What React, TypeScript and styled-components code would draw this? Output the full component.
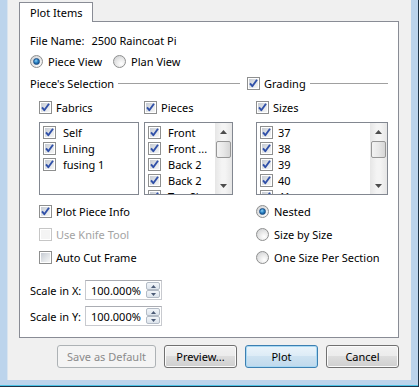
import React from "react";
import styled, { createGlobalStyle, css } from "styled-components";

const GlobalStyle = createGlobalStyle`
    html, body {
        margin: 0;
        padding: 0;
        background: #ffffff;
    }
    body {
        font-family: "Noto Sans", "Open Sans", sans-serif;
        font-size: 11px;
        color: #000000;
    }
`;

const Frame = styled.div`
    width: 419px;
    height: 387px;
    box-sizing: border-box;
    background: #bcd4ec;
    padding: 0 8px 7px 7px;
    box-shadow: inset -1px -1px 0 #1f3347, inset 0 -2px 0 #4cc3e6;
`;

const Body = styled.div`
    height: 380px;
    box-sizing: border-box;
    background: #f0f0f0;
    padding: 2px 12px 0 12px;
    display: flex;
    flex-direction: column;
    box-shadow: inset 1px 0 0 #d9e4ef;
`;

const TabStrip = styled.div`
    display: flex;
    position: relative;
    z-index: 1;
    margin-bottom: -1px;
`;

const Tab = styled.div`
    width: 74px;
    height: 20px;
    box-sizing: border-box;
    border: 1px solid #898c95;
    border-bottom: none;
    background: #ffffff;
    padding-left: 10px;
    display: flex;
    align-items: center;
`;

const Panel = styled.div`
    width: 380px;
    height: 317px;
    box-sizing: border-box;
    border: 1px solid #898c95;
    background: #ffffff;
    padding: 8px 10px 0 10px;
    display: flex;
    flex-direction: column;
`;

const Line = styled.div<{ $top?: number; $h?: number }>`
    height: ${(p) => p.$h ?? 20}px;
    margin-top: ${(p) => p.$top ?? 0}px;
    display: flex;
    align-items: center;
    white-space: nowrap;
`;

const FileLabel = styled.span`
    margin-right: 7px;
`;

const Option = styled.label<{ $gap?: number; $after?: number; $disabled?: boolean }>`
    display: flex;
    align-items: center;
    gap: ${(p) => p.$gap ?? 4}px;
    margin-right: ${(p) => p.$after ?? 0}px;
    color: ${(p) => (p.$disabled ? "#a3a3a3" : "inherit")};
    white-space: nowrap;
`;

const BoxShell = styled.span<{ $disabled?: boolean }>`
    width: 13px;
    height: 13px;
    flex: none;
    box-sizing: border-box;
    border: 1px solid ${(p) => (p.$disabled ? "#c6c6c6" : "#8e8f8f")};
    background: #ffffff;
    padding: 1px;
    display: flex;
`;

const BoxFill = styled.span<{ $disabled?: boolean }>`
    flex: 1;
    position: relative;
    ${(p) =>
        p.$disabled
            ? css`
                  background: #f4f4f4;
              `
            : css`
                  background: linear-gradient(135deg, #c6cbd3 0%, #e4e7ea 60%, #f6f6f6 100%);
              `}
    svg {
        position: absolute;
        left: -1px;
        top: -1px;
    }
`;

const CheckBox = ({ checked, disabled }: { checked?: boolean; disabled?: boolean }) => (
    <BoxShell $disabled={disabled}>
        <BoxFill $disabled={disabled}>
            {checked && (
                <svg width="11" height="11" viewBox="0 0 11 11">
                    <path
                        d="M2 5.3 L4.3 8.2 L9 1.8"
                        fill="none"
                        stroke="#3050a8"
                        strokeWidth="1.9"
                        strokeLinejoin="round"
                    />
                </svg>
            )}
        </BoxFill>
    </BoxShell>
);

const RadioDot = styled.span<{ $on?: boolean }>`
    width: 13px;
    height: 13px;
    flex: none;
    box-sizing: border-box;
    border-radius: 50%;
    border: 1px solid #8e8f8f;
    background: radial-gradient(circle at 65% 70%, #ffffff 0%, #e9e9e9 45%, #c9cbce 100%);
    display: flex;
    align-items: center;
    justify-content: center;
    &::after {
        content: "";
        display: ${(p) => (p.$on ? "block" : "none")};
        width: 5px;
        height: 5px;
        border-radius: 50%;
        background: radial-gradient(circle at 40% 35%, #8fd3f7 0%, #2a82c4 45%, #0c3f74 100%);
        border: 1px solid #1d4f86;
    }
`;

const SelectionRow = styled.div`
    display: flex;
    gap: 7px;
`;

const Group = styled.div<{ $w: number }>`
    width: ${(p) => p.$w}px;
    display: flex;
    flex-direction: column;
`;

const GroupHeader = styled.div`
    height: 20px;
    margin-top: 2px;
    display: flex;
    align-items: center;
    white-space: nowrap;
`;

const Rule = styled.span`
    flex: 1;
    height: 1px;
    margin-left: 4px;
    background: #a0a0a0;
`;

const Indent = styled.div`
    padding-left: 9px;
    display: flex;
    flex-direction: column;
`;

const Columns = styled.div`
    display: flex;
    gap: 5px;
`;

const Column = styled.div<{ $w: number }>`
    width: ${(p) => p.$w}px;
    display: flex;
    flex-direction: column;
`;

const ListBox = styled.div`
    height: 73px;
    margin-top: 5px;
    box-sizing: border-box;
    border: 1px solid #828790;
    background: #ffffff;
    display: flex;
    overflow: hidden;
`;

const Items = styled.div`
    flex: 1;
    padding: 1px 0 0 3px;
    overflow: hidden;
`;

const Item = styled.div<{ $gap: number }>`
    height: 16px;
    display: flex;
    align-items: center;
    gap: ${(p) => p.$gap}px;
    white-space: nowrap;
`;

const ScrollBar = styled.div`
    width: 17px;
    flex: none;
    background: linear-gradient(90deg, #e6e6e6, #f4f4f4 40%, #f4f4f4 60%, #e6e6e6);
    display: flex;
    flex-direction: column;
    align-items: center;
`;

const Arrow = styled.div`
    height: 17px;
    width: 17px;
    display: flex;
    align-items: center;
    justify-content: center;
`;

const Thumb = styled.div`
    margin-top: 1px;
    width: 15px;
    height: 17px;
    box-sizing: border-box;
    border: 1px solid #979797;
    border-radius: 2px;
    background: linear-gradient(90deg, #f3f3f3, #e8e8e8 50%, #d6d6d6);
`;

const Spacer = styled.div`
    flex: 1;
`;

const ScrollArrows = () => (
    <ScrollBar>
        <Arrow>
            <svg width="7" height="4" viewBox="0 0 7 4">
                <path d="M0 4 L3.5 0 L7 4 Z" fill="#4d4d4d" />
            </svg>
        </Arrow>
        <Thumb />
        <Spacer />
        <Arrow>
            <svg width="7" height="4" viewBox="0 0 7 4">
                <path d="M0 0 L3.5 4 L7 0 Z" fill="#4d4d4d" />
            </svg>
        </Arrow>
    </ScrollBar>
);

const OptionList = styled.div`
    margin-top: 5px;
    display: flex;
    flex-direction: column;
`;

const OptionRow = styled.div`
    height: 23px;
    display: flex;
    align-items: center;
`;

const ScaleRow = styled.div<{ $top: number }>`
    margin-top: ${(p) => p.$top}px;
    height: 20px;
    display: flex;
    align-items: center;
`;

const ScaleLabel = styled.span`
    width: 55px;
`;

const SpinBox = styled.div`
    width: 77px;
    height: 20px;
    box-sizing: border-box;
    border: 1px solid #c8cacf;
    border-top-color: #abadb3;
    background: #ffffff;
    display: flex;
    align-items: center;
    padding: 1px;
`;

const SpinText = styled.span`
    flex: 1;
    padding-left: 4px;
`;

const SpinButtons = styled.div`
    width: 14px;
    height: 16px;
    display: flex;
    flex-direction: column;
`;

const SpinButton = styled.div`
    flex: 1;
    box-sizing: border-box;
    border: 1px solid #b3bbc6;
    border-radius: 2px;
    background: linear-gradient(#f2f5f9, #dde4ec);
    display: flex;
    align-items: center;
    justify-content: center;
`;

const Spinner = ({ value }: { value: string }) => (
    <SpinBox>
        <SpinText>{value}</SpinText>
        <SpinButtons>
            <SpinButton>
                <svg width="5" height="3" viewBox="0 0 5 3">
                    <path d="M0 3 L2.5 0 L5 3 Z" fill="#4b5a76" />
                </svg>
            </SpinButton>
            <SpinButton>
                <svg width="5" height="3" viewBox="0 0 5 3">
                    <path d="M0 0 L2.5 3 L5 0 Z" fill="#4b5a76" />
                </svg>
            </SpinButton>
        </SpinButtons>
    </SpinBox>
);

const ButtonRow = styled.div`
    margin-top: 7px;
    display: flex;
    justify-content: flex-end;
    gap: 8px;
`;

const Button = styled.button<{ $w?: number; $default?: boolean }>`
    width: ${(p) => p.$w ?? 73}px;
    height: 23px;
    box-sizing: border-box;
    font: inherit;
    color: #000000;
    border: 1px solid #707070;
    border-radius: 3px;
    padding: 0;
    background: linear-gradient(#f2f2f2 0%, #ebebeb 50%, #dddddd 50%, #cfcfcf 100%);
    box-shadow: inset 0 0 0 1px #fbfbfb;
    ${(p) =>
        p.$default &&
        css`
            border-color: #3c7fb1;
            background: linear-gradient(#eaf4fb 0%, #dcebf6 50%, #cde2f1 50%, #c0d9ec 100%);
            box-shadow: inset 0 0 0 1px #a8d8f3;
        `}
    &:disabled {
        color: #8b8b8b;
        border-color: #adb2b5;
        background: #f4f4f4;
        box-shadow: none;
    }
`;

const fabrics = ["Self", "Lining", "fusing 1"];
const pieces = ["Front", "Front ...", "Back 2", "Back 2", "Top Sleeve"];
const sizes = ["37", "38", "39", "40", "41"];

const App = () => {
    return (
        <>
            <GlobalStyle />
            <Frame>
                <Body>
                    <TabStrip>
                        <Tab>Plot Items</Tab>
                    </TabStrip>
                    <Panel>
                        <Line>
                            <FileLabel>File Name:</FileLabel>
                            <span>2500 Raincoat Pi</span>
                        </Line>
                        <Line $top={1}>
                            <Option $gap={5} $after={11}>
                                <RadioDot $on />
                                Piece View
                            </Option>
                            <Option $gap={5}>
                                <RadioDot />
                                Plan View
                            </Option>
                        </Line>
                        <SelectionRow>
                            <Group $w={210}>
                                <GroupHeader>
                                    <span>Piece's Selection</span>
                                    <Rule />
                                </GroupHeader>
                                <Indent>
                                    <Columns>
                                        <Column $w={100}>
                                            <Line $top={4}>
                                                <Option>
                                                    <CheckBox checked />
                                                    Fabrics
                                                </Option>
                                            </Line>
                                            <ListBox>
                                                <Items>
                                                    {fabrics.map((f) => (
                                                        <Item key={f} $gap={7}>
                                                            <CheckBox checked />
                                                            {f}
                                                        </Item>
                                                    ))}
                                                </Items>
                                            </ListBox>
                                        </Column>
                                        <Column $w={89}>
                                            <Line $top={4}>
                                                <Option>
                                                    <CheckBox checked />
                                                    Pieces
                                                </Option>
                                            </Line>
                                            <ListBox>
                                                <Items>
                                                    {pieces.map((p, i) => (
                                                        <Item key={i} $gap={7}>
                                                            <CheckBox checked />
                                                            {p}
                                                        </Item>
                                                    ))}
                                                </Items>
                                                <ScrollArrows />
                                            </ListBox>
                                        </Column>
                                    </Columns>
                                    <OptionList>
                                        <OptionRow>
                                            <Option>
                                                <CheckBox checked />
                                                Plot Piece Info
                                            </Option>
                                        </OptionRow>
                                        <OptionRow>
                                            <Option $disabled>
                                                <CheckBox disabled />
                                                Use Knife Tool
                                            </Option>
                                        </OptionRow>
                                        <OptionRow>
                                            <Option>
                                                <CheckBox />
                                                Auto Cut Frame
                                            </Option>
                                        </OptionRow>
                                    </OptionList>
                                </Indent>
                            </Group>
                            <Group $w={141}>
                                <GroupHeader>
                                    <Option>
                                        <CheckBox checked />
                                        Grading
                                    </Option>
                                    <Rule />
                                </GroupHeader>
                                <Indent>
                                    <Line $top={4}>
                                        <Option>
                                            <CheckBox checked />
                                            Sizes
                                        </Option>
                                    </Line>
                                    <ListBox>
                                        <Items>
                                            {sizes.map((s) => (
                                                <Item key={s} $gap={5}>
                                                    <CheckBox checked />
                                                    {s}
                                                </Item>
                                            ))}
                                        </Items>
                                        <ScrollArrows />
                                    </ListBox>
                                    <OptionList>
                                        <OptionRow>
                                            <Option $gap={5}>
                                                <RadioDot $on />
                                                Nested
                                            </Option>
                                        </OptionRow>
                                        <OptionRow>
                                            <Option $gap={5}>
                                                <RadioDot />
                                                Size by Size
                                            </Option>
                                        </OptionRow>
                                        <OptionRow>
                                            <Option $gap={5}>
                                                <RadioDot />
                                                One Size Per Section
                                            </Option>
                                        </OptionRow>
                                    </OptionList>
                                </Indent>
                            </Group>
                        </SelectionRow>
                        <ScaleRow $top={11}>
                            <ScaleLabel>Scale in X:</ScaleLabel>
                            <Spinner value="100.000%" />
                        </ScaleRow>
                        <ScaleRow $top={6}>
                            <ScaleLabel>Scale in Y:</ScaleLabel>
                            <Spinner value="100.000%" />
                        </ScaleRow>
                    </Panel>
                    <ButtonRow>
                        <Button $w={99} disabled>
                            Save as Default
                        </Button>
                        <Button>Preview...</Button>
                        <Button $default>Plot</Button>
                        <Button>Cancel</Button>
                    </ButtonRow>
                </Body>
            </Frame>
        </>
    );
};

export default App;
